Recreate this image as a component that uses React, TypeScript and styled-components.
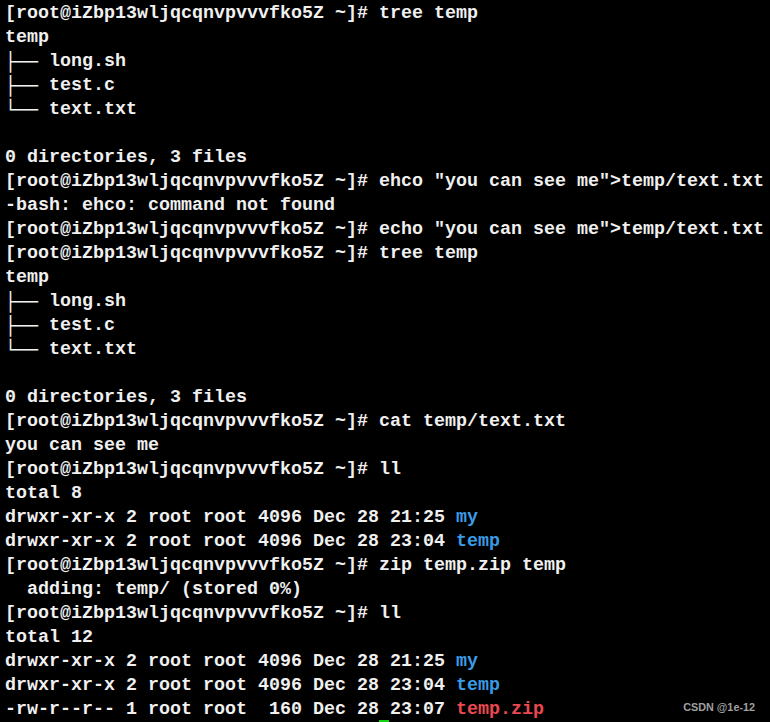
import React from "react";
import styled, { createGlobalStyle } from "styled-components";

const Global = createGlobalStyle`
  html, body { margin: 0; padding: 0; background: #000; }
  body { width: 770px; height: 722px; overflow: hidden; }
`;

const Terminal = styled.div`
  position: relative;
  width: 770px;
  height: 722px;
  background: #000;
  box-sizing: border-box;
  padding: 2px 0 0 5px;
  display: flex;
  flex-direction: column;
  font-family: "Liberation Mono", "DejaVu Sans Mono", monospace;
  font-weight: bold;
  font-size: 18.33px;
  color: #f0f0f0;
  overflow: hidden;
`;

const Line = styled.div`
  height: 24px;
  line-height: 24px;
  white-space: pre;
`;

const Seg = styled.span<{ $c?: "blue" | "red" }>`
  color: ${(p) => (p.$c === "blue" ? "#3a9be4" : p.$c === "red" ? "#eb4850" : "inherit")};
`;

const Tree = styled.span`
  display: inline-block;
  width: 44px;
  font-family: "DejaVu Sans Mono", monospace;
  font-weight: normal;
  font-size: 18.27px;
  overflow: hidden;
  vertical-align: top;
`;

const Cursor = styled.div`
  position: absolute;
  left: 379px;
  top: 720px;
  width: 10px;
  height: 2px;
  background: #13d313;
`;

const Watermark = styled.div`
  position: absolute;
  right: 15px;
  top: 701px;
  font-family: "Liberation Sans", Arial, sans-serif;
  font-size: 10.8px;
  line-height: 12px;
  color: #a0a0a0;
`;

type S = { t: string; c?: "blue" | "red"; tree?: boolean };
const P = "[root@iZbp13wljqcqnvpvvvfko5Z ~]# ";

const lines: S[][] = [
  [{ t: P + "tree temp" }],
  [{ t: "temp" }],
  [{ t: "├── ", tree: true }, { t: "long.sh" }],
  [{ t: "├── ", tree: true }, { t: "test.c" }],
  [{ t: "└── ", tree: true }, { t: "text.txt" }],
  [{ t: "" }],
  [{ t: "0 directories, 3 files" }],
  [{ t: P + 'ehco "you can see me">temp/text.txt' }],
  [{ t: "-bash: ehco: command not found" }],
  [{ t: P + 'echo "you can see me">temp/text.txt' }],
  [{ t: P + "tree temp" }],
  [{ t: "temp" }],
  [{ t: "├── ", tree: true }, { t: "long.sh" }],
  [{ t: "├── ", tree: true }, { t: "test.c" }],
  [{ t: "└── ", tree: true }, { t: "text.txt" }],
  [{ t: "" }],
  [{ t: "0 directories, 3 files" }],
  [{ t: P + "cat temp/text.txt" }],
  [{ t: "you can see me" }],
  [{ t: P + "ll" }],
  [{ t: "total 8" }],
  [{ t: "drwxr-xr-x 2 root root 4096 Dec 28 21:25 " }, { t: "my", c: "blue" }],
  [{ t: "drwxr-xr-x 2 root root 4096 Dec 28 23:04 " }, { t: "temp", c: "blue" }],
  [{ t: P + "zip temp.zip temp" }],
  [{ t: "  adding: temp/ (stored 0%)" }],
  [{ t: P + "ll" }],
  [{ t: "total 12" }],
  [{ t: "drwxr-xr-x 2 root root 4096 Dec 28 21:25 " }, { t: "my", c: "blue" }],
  [{ t: "drwxr-xr-x 2 root root 4096 Dec 28 23:04 " }, { t: "temp", c: "blue" }],
  [{ t: "-rw-r--r-- 1 root root  160 Dec 28 23:07 " }, { t: "temp.zip", c: "red" }],
];

export default function App() {
  return (
    <>
      <Global />
      <Terminal>
        {lines.map((segs, i) => (
          <Line key={i}>
            {segs.map((s, j) =>
              s.tree ? (
                <Tree key={j}>{s.t}</Tree>
              ) : (
                <Seg key={j} $c={s.c}>
                  {s.t}
                </Seg>
              )
            )}
          </Line>
        ))}
        <Cursor />
        <Watermark>CSDN @1e-12</Watermark>
      </Terminal>
    </>
  );
}
